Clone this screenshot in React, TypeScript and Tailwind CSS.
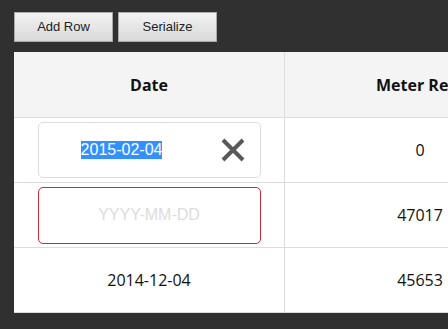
import React from "react";

function XIcon() {
  return (
    <svg width="26" height="26" viewBox="0 0 26 26" className="block">
      <path d="M3 3 L23 23 M23 3 L3 23" stroke="#595959" strokeWidth="4" strokeLinecap="butt" />
    </svg>
  );
}

export default function App() {
  const btn =
    "w-[99px] h-[30px] border border-[#a9a9a9] bg-gradient-to-b from-[#f3f3f3] to-[#d9d9d9] text-[13px] text-[#222] font-['Liberation_Sans',Arial,sans-serif] flex items-center justify-center";
  const cell = "border-b border-[#dcdcdc] bg-white flex items-center justify-center text-[16px] text-[#111] font-['Open_Sans',sans-serif]";
  return (
    <div className="w-[448px] h-[329px] bg-[#303030] overflow-hidden pt-[12px] pl-[14px]">
      <div className="flex gap-[5px]">
        <button className={btn}>Add Row</button>
        <button className={btn}>Serialize</button>
      </div>
      <div className="mt-[10px] grid grid-cols-[271px_270px] w-[541px]">
        <div className="h-[66px] bg-[#f4f4f4] border-b border-r border-[#dcdcdc] flex items-center justify-center font-['Open_Sans',sans-serif] font-bold text-[16px] text-[#111]">
          Date
        </div>
        <div className="h-[66px] bg-[#f4f4f4] border-b border-[#dcdcdc] flex items-center pl-[91px] font-['Open_Sans',sans-serif] font-bold text-[16px] text-[#111] whitespace-nowrap">
          Meter Reading
        </div>

        <div className={`${cell} h-[65px] border-r px-[23px]`}>
          <div className="relative w-[223px] h-[56px] rounded-[5px] border border-[#dedede] bg-white flex items-center pr-[55px] justify-center font-['Liberation_Sans',Arial,sans-serif] text-[16px]">
            <span className="bg-[#3390ff] text-white leading-[18px]">2015-02-04</span>
            <div className="absolute right-[14px] top-[14px]">
              <XIcon />
            </div>
          </div>
        </div>
        <div className={`${cell} h-[65px]`}>0</div>

        <div className={`${cell} h-[65px] border-r px-[23px]`}>
          <div className="w-[223px] h-[57px] rounded-[5px] border border-[#c0303a] bg-white flex items-center justify-center font-['Liberation_Sans',Arial,sans-serif] text-[16px] text-[#dcdcdc]">
            YYYY-MM-DD
          </div>
        </div>
        <div className={`${cell} h-[65px]`}>47017</div>

        <div className={`${cell} h-[65px] border-r`}>2014-12-04</div>
        <div className={`${cell} h-[65px]`}>45653</div>
      </div>
    </div>
  );
}
